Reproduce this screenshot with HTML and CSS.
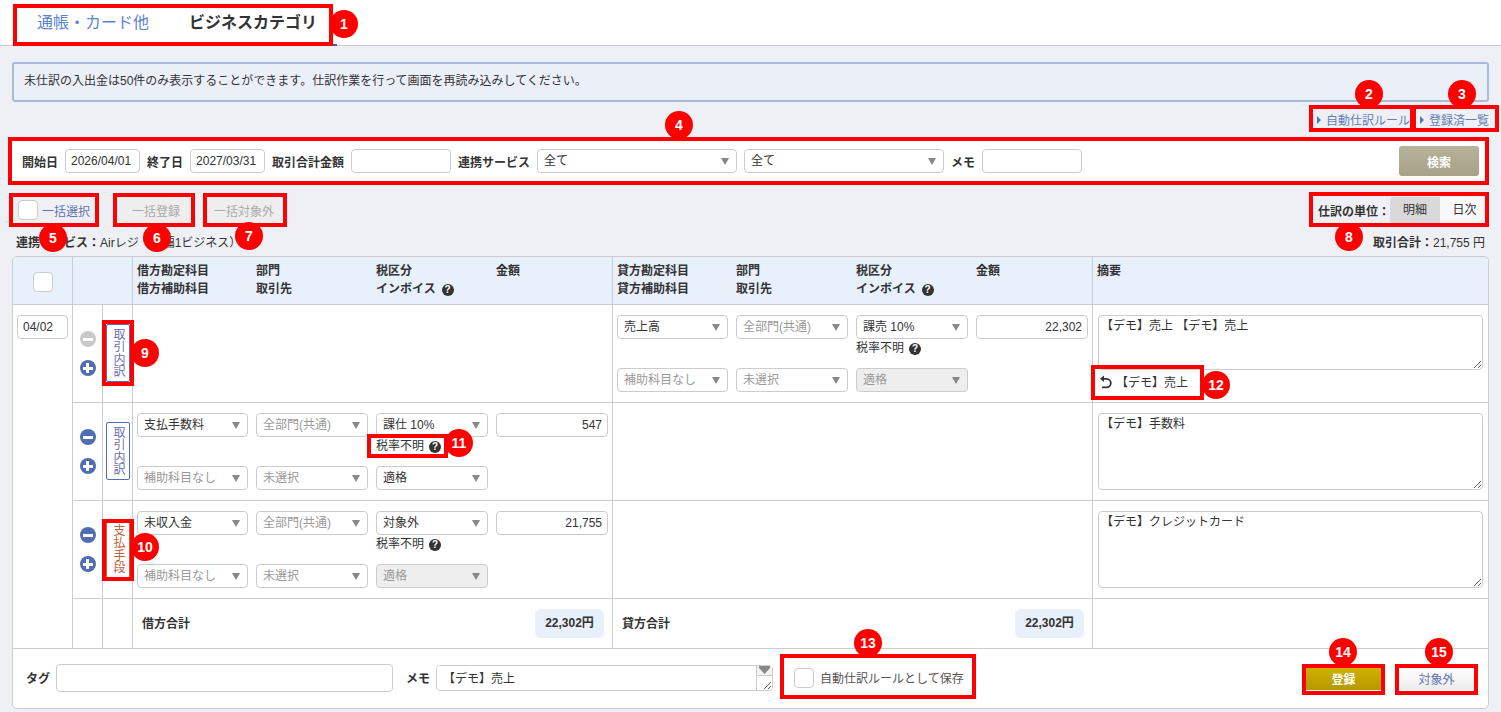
FILE: index.html
```html
<!DOCTYPE html>
<html lang="ja">
<head>
    <meta charset="UTF-8">
    <meta name="viewport" content="width=device-width, initial-scale=1.0">
    <title>未仕訳明細</title>
    <link rel="stylesheet" href="styles.css">
</head>
<body>
    <nav class="tab-bar">
        <a class="tab">通帳・カード他</a>
        <a class="tab tab-active">ビジネスカテゴリ</a>
    </nav>

    <main class="content">
        <div class="notice">未仕訳の入出金は50件のみ表示することができます。仕訳作業を行って画面を再読み込みしてください。</div>

        <div class="link-row">
            <a class="text-link">自動仕訳ルール</a>
            <a class="text-link">登録済一覧</a>
        </div>

        <form class="search-bar">
            <label class="field-label">開始日</label>
            <input class="input input-date" value="2026/04/01">
            <label class="field-label">終了日</label>
            <input class="input input-date" value="2027/03/31">
            <label class="field-label">取引合計金額</label>
            <input class="input input-wide">
            <label class="field-label">連携サービス</label>
            <div class="select select-long">全て</div>
            <div class="select select-long">全て</div>
            <label class="field-label">メモ</label>
            <input class="input input-wide">
            <button class="search-button" type="button">検索</button>
        </form>

        <div class="bulk-row">
            <span class="checkbox"></span>
            <a class="bulk-select">一括選択</a>
            <button class="bulk-button bulk-register" type="button">一括登録</button>
            <button class="bulk-button bulk-exclude" type="button">一括対象外</button>
            <div class="unit-switch">
                <span class="field-label">仕訳の単位：</span>
                <span class="unit unit-on">明細</span>
                <span class="unit">日次</span>
            </div>
        </div>

        <div class="info-row">
            <div><b>連携サービス：</b>Airレジ（店編1ビジネス）</div>
            <div class="info-total"><b>取引合計：</b>21,755 円</div>
        </div>

        <section class="journal">
            <table class="journal-table">
                <colgroup>
                    <col class="col-date">
                    <col class="col-tool">
                    <col class="col-tool">
                    <col class="col-side">
                    <col class="col-side">
                    <col class="col-memo">
                </colgroup>
                <thead>
                    <tr>
                        <th class="head-check"><span class="checkbox"></span></th>
                        <th colspan="2"></th>
                        <th>
                            <div class="head-grid">
                                <span>借方勘定科目</span><span>部門</span><span>税区分</span><span>金額</span>
                                <span>借方補助科目</span><span>取引先</span><span>インボイス<i class="help">?</i></span>
                            </div>
                        </th>
                        <th>
                            <div class="head-grid">
                                <span>貸方勘定科目</span><span>部門</span><span>税区分</span><span>金額</span>
                                <span>貸方補助科目</span><span>取引先</span><span>インボイス<i class="help">?</i></span>
                            </div>
                        </th>
                        <th class="head-memo">摘要</th>
                    </tr>
                </thead>
                <tbody>
                    <tr>
                        <td rowspan="4" class="cell-date"><input class="input input-day" value="04/02"></td>
                        <td>
                            <div class="round-stack">
                                <span class="round round-minus round-off"></span>
                                <span class="round round-plus"></span>
                            </div>
                        </td>
                        <td><a class="side-tag">取引内訳</a></td>
                        <td></td>
                        <td>
                            <div class="entry-grid">
                                <div class="select">売上高</div>
                                <div class="select select-muted">全部門(共通)</div>
                                <div class="select">課売 10%</div>
                                <input class="input input-amount" value="22,302">
                                <div class="tax-note">税率不明<i class="help">?</i></div>
                                <div class="select select-muted">補助科目なし</div>
                                <div class="select select-muted">未選択</div>
                                <div class="select select-off">適格</div>
                            </div>
                        </td>
                        <td class="cell-memo">
                            <textarea class="memo-area memo-short">【デモ】売上 【デモ】売上</textarea>
                            <div class="memo-undo">
                                <svg class="undo-icon" viewBox="0 0 14 14" width="14" height="14">
                                    <path d="M3.5 3.8 H7.5 a4.3 4.3 0 0 1 0 8.6 H3" fill="none" stroke="#333" stroke-width="1.8"/>
                                    <path d="M5 0.5 L1 3.8 L5 7.1 Z" fill="#333"/>
                                </svg>
                                <span>【デモ】売上</span>
                            </div>
                        </td>
                    </tr>
                    <tr>
                        <td>
                            <div class="round-stack">
                                <span class="round round-minus"></span>
                                <span class="round round-plus"></span>
                            </div>
                        </td>
                        <td><a class="side-tag">取引内訳</a></td>
                        <td>
                            <div class="entry-grid">
                                <div class="select">支払手数料</div>
                                <div class="select select-muted">全部門(共通)</div>
                                <div class="select">課仕 10%</div>
                                <input class="input input-amount" value="547">
                                <div class="tax-note">税率不明<i class="help">?</i></div>
                                <div class="select select-muted">補助科目なし</div>
                                <div class="select select-muted">未選択</div>
                                <div class="select">適格</div>
                            </div>
                        </td>
                        <td></td>
                        <td class="cell-memo"><textarea class="memo-area">【デモ】手数料</textarea></td>
                    </tr>
                    <tr>
                        <td>
                            <div class="round-stack">
                                <span class="round round-minus"></span>
                                <span class="round round-plus"></span>
                            </div>
                        </td>
                        <td><a class="side-tag side-tag-pay">支払手段</a></td>
                        <td>
                            <div class="entry-grid">
                                <div class="select">未収入金</div>
                                <div class="select select-muted">全部門(共通)</div>
                                <div class="select">対象外</div>
                                <input class="input input-amount" value="21,755">
                                <div class="tax-note">税率不明<i class="help">?</i></div>
                                <div class="select select-muted">補助科目なし</div>
                                <div class="select select-muted">未選択</div>
                                <div class="select select-off">適格</div>
                            </div>
                        </td>
                        <td></td>
                        <td class="cell-memo"><textarea class="memo-area">【デモ】クレジットカード</textarea></td>
                    </tr>
                    <tr class="total-row">
                        <td></td>
                        <td></td>
                        <td><div class="total-line"><b class="total-label">借方合計</b><b class="total-pill">22,302円</b></div></td>
                        <td><div class="total-line"><b class="total-label">貸方合計</b><b class="total-pill">22,302円</b></div></td>
                        <td></td>
                    </tr>
                </tbody>
            </table>

            <div class="journal-foot">
                <label class="field-label">タグ</label>
                <input class="input input-tag">
                <label class="field-label foot-memo-label">メモ</label>
                <div class="foot-memo">
                    <textarea class="foot-memo-area">【デモ】売上</textarea>
                    <span class="foot-spin"></span>
                </div>
                <span class="checkbox foot-check"></span>
                <span class="foot-rule">自動仕訳ルールとして保存</span>
                <button class="save-button" type="button">登録</button>
                <button class="exclude-button" type="button">対象外</button>
            </div>
        </section>
    </main>

    <!-- 説明用の赤枠と番号 -->
    <div class="marks">
        <span class="mark mark-1"></span>
        <span class="mark mark-2"></span>
        <span class="mark mark-3"></span>
        <span class="mark mark-4"></span>
        <span class="mark mark-5"></span>
        <span class="mark mark-6"></span>
        <span class="mark mark-7"></span>
        <span class="mark mark-8"></span>
        <span class="mark mark-9"></span>
        <span class="mark mark-10"></span>
        <span class="mark mark-11"></span>
        <span class="mark mark-12"></span>
        <span class="mark mark-13"></span>
        <span class="mark mark-14"></span>
        <span class="mark mark-15"></span>
        <span class="badge badge-1">1</span>
        <span class="badge badge-2">2</span>
        <span class="badge badge-3">3</span>
        <span class="badge badge-4">4</span>
        <span class="badge badge-5">5</span>
        <span class="badge badge-6">6</span>
        <span class="badge badge-7">7</span>
        <span class="badge badge-8">8</span>
        <span class="badge badge-9">9</span>
        <span class="badge badge-10">10</span>
        <span class="badge badge-11">11</span>
        <span class="badge badge-12">12</span>
        <span class="badge badge-13">13</span>
        <span class="badge badge-14">14</span>
        <span class="badge badge-15">15</span>
    </div>
</body>
</html>
```

FILE: styles.css
```css
* {
    margin: 0;
    padding: 0;
    box-sizing: border-box;
}

body {
    position: relative;
    height: 712px;
    overflow: hidden;
    background: #eef0f5;
    color: #333;
    font-family: "Liberation Sans", "Noto Sans CJK JP", sans-serif;
    font-size: 12px;
}

input,
textarea,
button {
    font-family: inherit;
    font-size: 12px;
    color: #333;
}

/* tabs */
.tab-bar {
    display: flex;
    height: 46px;
    padding-left: 17px;
    background: #fff;
    border-bottom: 1px solid #c8c8cc;
}

.tab {
    height: 46px;
    padding: 0 20px;
    font-size: 16px;
    line-height: 46px;
    color: #5c84cc;
}

.tab-active {
    color: #333;
    font-weight: bold;
    border-bottom: 2px solid #3f5fb0;
}

/* top area */
.content {
    padding: 16px 12px 0;
}

.notice {
    height: 40px;
    padding-left: 10px;
    line-height: 34px;
    background: #ebeff8;
    border: 2px solid #a9b9da;
    border-radius: 3px;
}

.link-row {
    display: flex;
    justify-content: flex-end;
    align-items: center;
    gap: 19px;
    height: 35px;
    padding-bottom: 1px;
}

.text-link {
    position: relative;
    color: #5f7fb8;
}

.text-link::before {
    content: "";
    position: absolute;
    top: 5px;
    left: -9px;
    border-left: 4px solid #4f78c4;
    border-top: 4px solid transparent;
    border-bottom: 4px solid transparent;
}

.search-bar {
    display: flex;
    align-items: center;
    gap: 7px;
    height: 48px;
    padding: 0 10px;
    background: #fff;
}

.field-label {
    font-weight: bold;
    white-space: nowrap;
}

.input {
    height: 24px;
    padding: 0 5px;
    background: #fff;
    border: 1px solid #ccc;
    border-radius: 4px;
    outline: none;
}

.input-date { width: 75px; }
.input-wide { width: 100px; }

.select {
    position: relative;
    height: 24px;
    padding-left: 6px;
    line-height: 23px;
    background: #fff;
    border: 1px solid #ccc;
    border-radius: 4px;
}

.select::after {
    content: "";
    position: absolute;
    top: 8px;
    right: 7px;
    border-top: 7px solid #888;
    border-left: 4px solid transparent;
    border-right: 4px solid transparent;
}

.select-long { width: 200px; }
.select-muted { color: #999; }

.select-off {
    color: #999;
    background: #eee;
}

.search-button {
    width: 80px;
    height: 30px;
    margin-left: auto;
    color: #fff;
    font-weight: bold;
    background: linear-gradient(#b7b39c, #a6a186);
    border: none;
    border-radius: 3px;
}

.bulk-row {
    display: flex;
    align-items: center;
    height: 34px;
    margin-top: 8px;
    padding-left: 6px;
}

.checkbox {
    display: block;
    flex: none;
    width: 20px;
    height: 20px;
    background: #fff;
    border: 1px solid #ccc;
    border-radius: 4px;
}

.bulk-select {
    margin-left: 4px;
    color: #5f72b0;
}

.bulk-button {
    height: 26px;
    color: #aaa;
    background: #eee;
    border: none;
    border-radius: 3px;
}

.bulk-register {
    width: 76px;
    margin-left: 28px;
}

.bulk-exclude {
    width: 74px;
    margin-left: 13px;
}

.unit-switch {
    display: flex;
    align-items: center;
    margin-left: auto;
}

.unit {
    width: 49px;
    height: 26px;
    line-height: 26px;
    text-align: center;
    background: #f8f8f8;
}

.unit-on {
    width: 50px;
    background: #d9d9d9;
    border-radius: 3px 0 0 3px;
}

.info-row {
    display: flex;
    justify-content: space-between;
    align-items: center;
    height: 29px;
    padding: 0 4px;
}

/* journal table */
.journal {
    height: 453px;
    background: #fff;
    border: 1px solid #ccc;
    border-radius: 5px;
    overflow: hidden;
}

.journal-table {
    width: 1475px;
    table-layout: fixed;
    border-collapse: separate;
    border-spacing: 0;
}

.col-date { width: 60px; }
.col-tool { width: 30px; }
.col-side { width: 480px; }
.col-memo { width: 395px; }

.journal-table th,
.journal-table td {
    vertical-align: top;
    border-right: 1px solid #ccc;
    border-bottom: 1px solid #ccc;
}

.journal-table th:last-child,
.journal-table td:last-child {
    border-right: none;
}

.journal-table td.cell-date {
    padding: 10px 0 0 4px;
    border-right: 1px solid #ccc;
}

.journal-table thead tr { height: 48px; }
.journal-table tbody tr { height: 98px; }
.journal-table tbody tr.total-row { height: 50px; }

.journal-table th {
    padding-top: 5px;
    text-align: left;
    line-height: 18px;
    background: #e8f0fb;
}

.journal-table th.head-check {
    padding: 15px 0 0 20px;
}

.journal-table th.head-memo {
    padding-left: 4px;
}

.head-grid,
.entry-grid {
    display: grid;
    grid-template-columns: 111px 112px 112px 112px;
    column-gap: 8px;
    padding-left: 4px;
}

.help {
    display: inline-block;
    width: 12px;
    height: 12px;
    margin-left: 6px;
    color: #fff;
    font-style: normal;
    font-size: 10px;
    font-weight: bold;
    line-height: 12px;
    text-align: center;
    background: #333;
    border-radius: 50%;
}

.input-day {
    width: 51px;
}

.round-stack {
    display: flex;
    flex-direction: column;
    align-items: center;
    gap: 13px;
    padding-top: 26px;
}

.round {
    position: relative;
    display: block;
    width: 16px;
    height: 16px;
    background: #4f6db0;
    border-radius: 50%;
}

.round-off { background: #c9c9c9; }

.round::before,
.round-plus::after {
    content: "";
    position: absolute;
    top: 6.5px;
    left: 3px;
    width: 10px;
    height: 3px;
    background: #fff;
}

.round-plus::after {
    top: 3px;
    left: 6.5px;
    width: 3px;
    height: 10px;
}

.side-tag {
    display: block;
    width: 24px;
    height: 58px;
    margin: 19px 0 0 3px;
    color: #6a70b4;
    line-height: 22px;
    letter-spacing: 0.5px;
    text-align: center;
    writing-mode: vertical-rl;
    border: 1px solid #4f6db0;
    border-radius: 2px;
}

.side-tag-pay {
    color: #c0603c;
    border-color: #c0603c;
}

.entry-grid {
    grid-template-rows: 24px 29px 24px;
    padding-top: 10px;
}

.entry-grid > :nth-child(n+6) {
    grid-row: 3;
}

.input-amount {
    width: 112px;
    text-align: right;
}

.tax-note {
    grid-column: 3;
    line-height: 18px;
    white-space: nowrap;
}

.tax-note .help { margin-left: 5px; }

.cell-memo {
    padding: 10px 0 0 5px;
}

.memo-area {
    display: block;
    width: 385px;
    height: 77px;
    padding: 1px 2px;
    line-height: 18px;
    background: #fff;
    border: 1px solid #ccc;
    border-radius: 4px;
    outline: none;
}

.memo-short { height: 55px; }

.memo-undo {
    display: flex;
    align-items: center;
    gap: 3px;
    height: 23px;
    padding-left: 1px;
}

.total-line {
    display: flex;
    justify-content: space-between;
    align-items: center;
    height: 49px;
    padding: 0 8px 0 9px;
}

.total-label { padding-bottom: 3px; }

.total-pill {
    width: 69px;
    height: 29px;
    line-height: 29px;
    text-align: center;
    background: #e8f0fb;
    border-radius: 6px;
}

.journal-foot {
    display: flex;
    align-items: center;
    height: 58px;
    padding: 0 14px 0 13px;
}

.journal-foot .field-label {
    margin-right: 6px;
    padding-bottom: 2px;
}

.input-tag {
    width: 337px;
    height: 28px;
}

.journal-foot .foot-memo-label { margin-left: 13px; }

.foot-memo {
    position: relative;
    width: 337px;
    height: 26px;
}

.foot-memo-area {
    display: block;
    width: 337px;
    height: 26px;
    padding: 4px 6px 2px;
    line-height: 19px;
    background: #fff;
    border: 1px solid #ccc;
    border-radius: 4px;
    outline: none;
}

/* scrollbar column beside the memo */
.foot-spin {
    position: absolute;
    top: 1px;
    right: 1px;
    width: 16px;
    height: 24px;
    border-left: 1px solid #ccc;
}

.foot-spin::before {
    content: "";
    position: absolute;
    top: 0;
    left: 0;
    width: 15px;
    height: 9px;
    background: #f2f2f2;
    border-bottom: 1px solid #ccc;
}

.foot-spin::after {
    content: "";
    position: absolute;
    top: 0;
    left: 2px;
    width: 11px;
    height: 8px;
    background: #888;
    clip-path: polygon(0 0, 100% 0, 100% 25%, 50% 100%, 0 25%);
}

.foot-check { margin-left: 21px; }

.foot-rule {
    margin-left: 6px;
    padding-bottom: 2px;
    color: #555;
}

.save-button,
.exclude-button {
    width: 75px;
    height: 23px;
    border: none;
}

.save-button {
    margin-left: auto;
    color: #fff;
    font-weight: bold;
    background: linear-gradient(#d1b200, #b69800);
}

.exclude-button {
    margin-left: 18px;
    color: #5f72b0;
    background: linear-gradient(#fff, #ececec);
}

/* annotation layer */
.mark {
    position: absolute;
    border: 4px solid #f00;
}

.badge {
    position: absolute;
    width: 28px;
    height: 28px;
    margin: -14px 0 0 -14px;
    color: #fff;
    font-size: 14px;
    font-weight: bold;
    line-height: 28px;
    text-align: center;
    background: #f00;
    border-radius: 50%;
}

.mark-1 { left: 13px; top: 4px; width: 320px; height: 42px; }
.mark-2 { left: 1309px; top: 105px; width: 105px; height: 27px; }
.mark-3 { left: 1412px; top: 105px; width: 87px; height: 27px; }
.mark-4 { left: 8px; top: 137px; width: 1481px; height: 48px; }
.mark-5 { left: 9px; top: 193px; width: 90px; height: 34px; }
.mark-6 { left: 113px; top: 193px; width: 82px; height: 34px; }
.mark-7 { left: 203px; top: 193px; width: 84px; height: 34px; }
.mark-8 { left: 1309px; top: 192px; width: 180px; height: 35px; }
.mark-9 { left: 102px; top: 320px; width: 32px; height: 66px; }
.mark-10 { left: 102px; top: 519px; width: 32px; height: 62px; }
.mark-11 { left: 367px; top: 434px; width: 81px; height: 24px; }
.mark-12 { left: 1091px; top: 365px; width: 113px; height: 35px; }
.mark-13 { left: 780px; top: 654px; width: 196px; height: 45px; }
.mark-14 { left: 1302px; top: 664px; width: 83px; height: 31px; }
.mark-15 { left: 1395px; top: 664px; width: 83px; height: 31px; }

.badge-1 { left: 344px; top: 24px; }
.badge-2 { left: 1369px; top: 94px; }
.badge-3 { left: 1462px; top: 94px; }
.badge-4 { left: 679px; top: 125px; }
.badge-5 { left: 53px; top: 238px; }
.badge-6 { left: 157px; top: 238px; }
.badge-7 { left: 249px; top: 236px; }
.badge-8 { left: 1349px; top: 237px; }
.badge-9 { left: 145px; top: 353px; }
.badge-10 { left: 145px; top: 547px; }
.badge-11 { left: 459px; top: 443px; }
.badge-12 { left: 1216px; top: 385px; }
.badge-13 { left: 868px; top: 643px; }
.badge-14 { left: 1343px; top: 652px; }
.badge-15 { left: 1439px; top: 652px; }
```
